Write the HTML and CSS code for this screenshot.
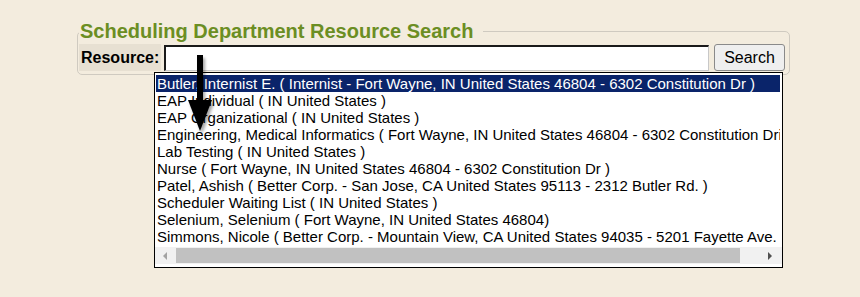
FILE: index.html
```html
<!DOCTYPE html>
<html lang="en">
<head>
    <meta charset="UTF-8">
    <title>Scheduling Department Resource Search</title>
    <link rel="stylesheet" href="styles.css">
</head>
<body>
    <div class="page">
        <!-- Search form -->
        <fieldset class="search-box">
            <legend>Scheduling Department Resource Search</legend>
            <div class="search-row">
                <label for="resource">Resource:</label>
                <input type="text" id="resource">
                <button type="button">Search</button>
            </div>
        </fieldset>

        <!-- Autocomplete results -->
        <div class="results">
            <ul class="results-list">
                <li class="selected">Butler, Internist E. ( Internist - Fort Wayne, IN United States 46804 - 6302 Constitution Dr )</li>
                <li>EAP Individual ( IN United States )</li>
                <li>EAP Organizational ( IN United States )</li>
                <li>Engineering, Medical Informatics ( Fort Wayne, IN United States 46804 - 6302 Constitution Drive )</li>
                <li>Lab Testing ( IN United States )</li>
                <li>Nurse ( Fort Wayne, IN United States 46804 - 6302 Constitution Dr )</li>
                <li>Patel, Ashish ( Better Corp. - San Jose, CA United States 95113 - 2312 Butler Rd. )</li>
                <li>Scheduler Waiting List ( IN United States )</li>
                <li>Selenium, Selenium ( Fort Wayne, IN United States 46804)</li>
                <li>Simmons, Nicole ( Better Corp. - Mountain View, CA United States 94035 - 5201 Fayette Ave. )</li>
            </ul>
            <div class="hscroll">
                <span class="arrow-left"></span>
                <span class="thumb"></span>
                <span class="arrow-right"></span>
            </div>
        </div>

        <!-- Annotation arrow -->
        <svg class="pointer" width="40" height="90" viewBox="0 0 40 90">
            <defs>
                <filter id="shadow" x="-50%" y="-20%" width="200%" height="150%">
                    <feDropShadow dx="2" dy="3" stdDeviation="1.5" flood-color="#000" flood-opacity="0.35"/>
                </filter>
            </defs>
            <g filter="url(#shadow)">
                <rect x="11" y="2" width="6" height="50" fill="#000"/>
                <polygon points="2,47 26,47 14,78" fill="#000"/>
            </g>
        </svg>
    </div>
</body>
</html>
```

FILE: styles.css
```css
body {
    margin: 0;
    background-color: #f3ecde;
    font-family: Arial, "Liberation Sans", sans-serif;
}

.page {
    position: relative;
    padding: 20px 0 0 77px;
    height: 277px;
}

.search-box {
    width: 706px;
    margin: 0;
    padding: 0 4px 3px 1px;
    border: 1px solid #cfcac0;
    border-radius: 5px;
}

.search-box legend {
    padding: 0 10px 0 1px;
    margin-left: 0;
    font-size: 20px;
    font-weight: bold;
    color: #6b8e23;
}

.search-row {
    display: flex;
    align-items: center;
    margin-top: 1px;
}

.search-row label {
    display: flex;
    align-items: center;
    width: 80px;
    height: 27px;
    padding-left: 2px;
    background-color: #e7e0d2;
    font-size: 16px;
    font-weight: bold;
    color: #000;
}

.search-row input {
    box-sizing: border-box;
    width: 545px;
    height: 26px;
    margin-left: 3px;
    border-top: 2px solid #1a1a1a;
    border-left: 2px solid #1a1a1a;
    border-right: 1px solid #c8c8c8;
    border-bottom: 1px solid #c8c8c8;
    background: #fff;
}

.search-row button {
    box-sizing: border-box;
    width: 71px;
    height: 27px;
    margin-left: 5px;
    padding: 0;
    border: 1px solid #8a8a8a;
    border-radius: 3px;
    background-color: #efefef;
    font-family: Arial, "Liberation Sans", sans-serif;
    font-size: 16px;
    color: #000;
}

.results {
    position: absolute;
    left: 154px;
    top: 72px;
    box-sizing: border-box;
    width: 629px;
    height: 196px;
    border: 1px solid #000;
    background-color: #fff;
    padding: 2px 2px 0 1px;
}

.results-list {
    list-style-type: none;
    margin: 0;
    padding: 0;
}

.results-list li {
    height: 17px;
    line-height: 17px;
    padding-left: 1px;
    font-size: 15px;
    color: #000;
    white-space: nowrap;
    overflow: hidden;
}

.results-list li.selected {
    background-color: #0a246a;
    color: #fff;
}

.hscroll {
    position: relative;
    margin: 2px -2px 0 -1px;
    height: 17px;
    background-color: #f1f1f1;
}

.hscroll .thumb {
    position: absolute;
    left: 21px;
    top: 1px;
    width: 564px;
    height: 15px;
    background-color: #c1c1c1;
}

.hscroll .arrow-left,
.hscroll .arrow-right {
    position: absolute;
    top: 5px;
    width: 0;
    height: 0;
    border-top: 4px solid transparent;
    border-bottom: 4px solid transparent;
}

.hscroll .arrow-left {
    left: 8px;
    border-right: 4px solid #a3a3a3;
}

.hscroll .arrow-right {
    right: 10px;
    border-left: 4px solid #505050;
}

.pointer {
    position: absolute;
    left: 186px;
    top: 53px;
}
```
